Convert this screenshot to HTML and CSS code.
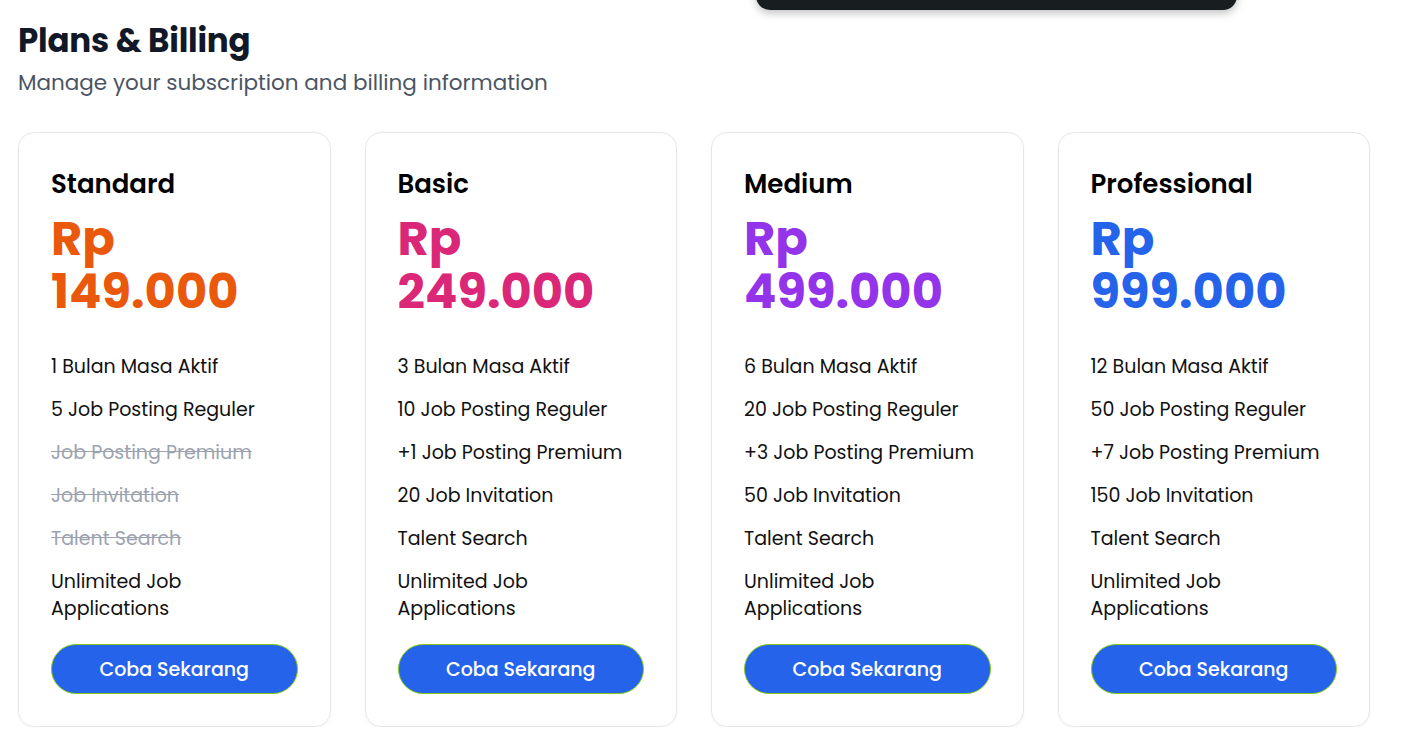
FILE: index.html
```html
<!DOCTYPE html>
<html lang="id">
<head>
<meta charset="utf-8">
<title>Plans &amp; Billing</title>
<link rel="stylesheet" href="styles.css">
</head>
<body>
<div class="toast"></div>
<main class="page">
  <header class="head">
    <h1 class="title">Plans &amp; Billing</h1>
    <p class="subtitle">Manage your subscription and billing information</p>
  </header>
  <section class="plans">
    <article class="card">
      <h2 class="name">Standard</h2>
      <div class="price orange"><span class="cur">Rp</span><span class="amt">149.000</span></div>
      <ul class="features">
        <li>1 Bulan Masa Aktif</li>
        <li>5 Job Posting Reguler</li>
        <li class="off">Job Posting Premium</li>
        <li class="off">Job Invitation</li>
        <li class="off">Talent Search</li>
        <li>Unlimited Job Applications</li>
      </ul>
      <button class="cta">Coba Sekarang</button>
    </article>
    <article class="card">
      <h2 class="name">Basic</h2>
      <div class="price pink"><span class="cur">Rp</span><span class="amt">249.000</span></div>
      <ul class="features">
        <li>3 Bulan Masa Aktif</li>
        <li>10 Job Posting Reguler</li>
        <li>+1 Job Posting Premium</li>
        <li>20 Job Invitation</li>
        <li>Talent Search</li>
        <li>Unlimited Job Applications</li>
      </ul>
      <button class="cta">Coba Sekarang</button>
    </article>
    <article class="card">
      <h2 class="name">Medium</h2>
      <div class="price purple"><span class="cur">Rp</span><span class="amt">499.000</span></div>
      <ul class="features">
        <li>6 Bulan Masa Aktif</li>
        <li>20 Job Posting Reguler</li>
        <li>+3 Job Posting Premium</li>
        <li>50 Job Invitation</li>
        <li>Talent Search</li>
        <li>Unlimited Job Applications</li>
      </ul>
      <button class="cta">Coba Sekarang</button>
    </article>
    <article class="card">
      <h2 class="name">Professional</h2>
      <div class="price blue"><span class="cur">Rp</span><span class="amt">999.000</span></div>
      <ul class="features">
        <li>12 Bulan Masa Aktif</li>
        <li>50 Job Posting Reguler</li>
        <li>+7 Job Posting Premium</li>
        <li>150 Job Invitation</li>
        <li>Talent Search</li>
        <li>Unlimited Job Applications</li>
      </ul>
      <button class="cta">Coba Sekarang</button>
    </article>
  </section>
</main>
</body>
</html>
```
FILE: styles.css
```css
* { box-sizing: border-box; }
html, body { margin: 0; padding: 0; background: #ffffff; }
body {
  font-family: "Poppins", "Open Sans", "Noto Sans", sans-serif;
  color: #000;
  overflow: hidden;
}
.toast {
  position: absolute;
  left: 756px;
  top: -40px;
  width: 481px;
  height: 50px;
  background: #181d20;
  border-radius: 14px;
  box-shadow: 0 3px 8px rgba(0,0,0,0.25);
}
.page {
  padding: 21px 18px 0 18px;
}
.head { margin-bottom: 29px; }
.title {
  margin: 0;
  font-size: 32.5px;
  line-height: 40px;
  font-weight: 700;
  color: #111827;
  letter-spacing: -0.2px;
}
.subtitle {
  margin: 2px 0 0 0;
  font-size: 21.5px;
  line-height: 40px;
  font-weight: 400;
  color: #4b5563;
}
.plans {
  display: grid;
  grid-template-columns: repeat(4, 312.5px);
  column-gap: 34px;
}
.card {
  border: 1px solid #e5e7eb;
  border-radius: 16px;
  padding: 33px 32px 32px 32px;
  box-shadow: 0 1px 3px rgba(0,0,0,0.05);
  display: flex;
  flex-direction: column;
}
.name {
  margin: 0;
  font-size: 26px;
  line-height: 36px;
  font-weight: 600;
  color: #000;
}
.price {
  margin-top: 10px;
  font-size: 48px;
  line-height: 53px;
  font-weight: 700;
  display: flex;
  flex-direction: column;
}
.cur, .amt { display: block; height: 53px; }
.orange { color: #ea580c; }
.pink { color: #db2777; }
.purple { color: #9333ea; }
.blue { color: #2563eb; }
.features {
  list-style: none;
  margin: 35px 0 0 0;
  padding: 0;
  display: flex;
  flex-direction: column;
  gap: 16px;
  font-size: 19px;
  line-height: 27px;
}
.features li { color: #111; }
.features li.off {
  color: #9ca3af;
  text-decoration: line-through;
}
.cta {
  margin-top: 22px;
  height: 50px;
  width: 100%;
  border-radius: 25px;
  border: 1px solid #84cc16;
  background: #2563eb;
  color: #fff;
  font-family: inherit;
  font-size: 19px;
  font-weight: 500;
  cursor: pointer;
}
```
